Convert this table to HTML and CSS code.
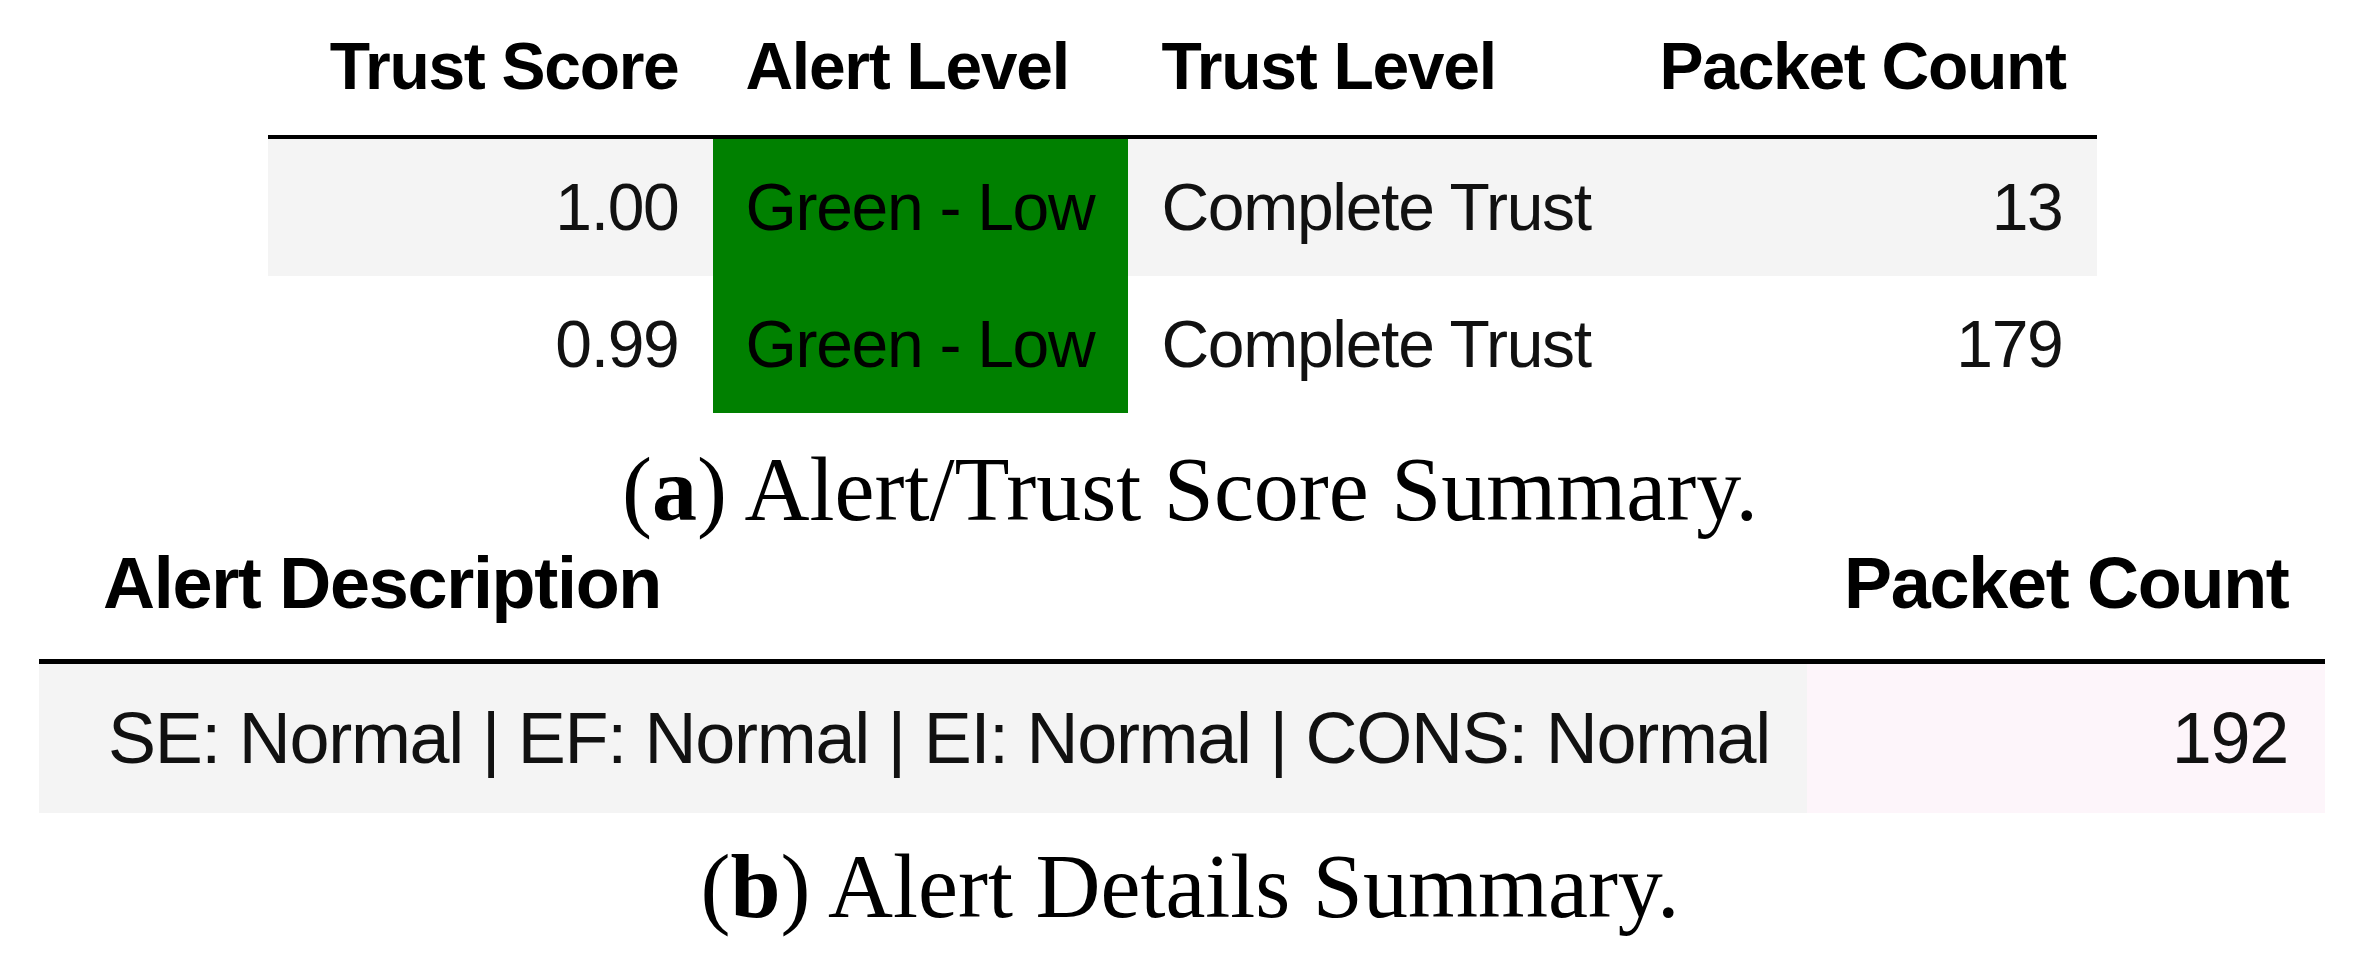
FILE: index.html
```html
<!DOCTYPE html>
<html lang="en">
<head>
<meta charset="utf-8">
<title>Alert Summary</title>
<link rel="stylesheet" href="styles.css">
</head>
<body>
<div class="figure">
  <table class="tbl tbl-a">
    <colgroup>
      <col class="a-c1"><col class="a-c2"><col class="a-c3"><col class="a-c4">
    </colgroup>
    <thead>
      <tr>
        <th class="right">Trust Score</th>
        <th class="left">Alert Level</th>
        <th class="left">Trust Level</th>
        <th class="right">Packet Count</th>
      </tr>
    </thead>
    <tbody>
      <tr class="odd">
        <td class="right">1.00</td>
        <td class="left green">Green - Low</td>
        <td class="left">Complete Trust</td>
        <td class="right">13</td>
      </tr>
      <tr>
        <td class="right">0.99</td>
        <td class="left green">Green - Low</td>
        <td class="left">Complete Trust</td>
        <td class="right">179</td>
      </tr>
    </tbody>
  </table>
  <p class="caption caption-a">(<b>a</b>) Alert/Trust Score Summary.</p>

  <table class="tbl tbl-b">
    <colgroup>
      <col class="b-c1"><col class="b-c2">
    </colgroup>
    <thead>
      <tr>
        <th class="left desc-head">Alert Description</th>
        <th class="right">Packet Count</th>
      </tr>
    </thead>
    <tbody>
      <tr class="odd">
        <td class="right">SE: Normal | EF: Normal | EI: Normal | CONS: Normal</td>
        <td class="right pink">192</td>
      </tr>
    </tbody>
  </table>
  <p class="caption caption-b">(<b>b</b>) Alert Details Summary.</p>
</div>
</body>
</html>
```

FILE: styles.css
```css
html, body {
  margin: 0;
  padding: 0;
  background: #ffffff;
}

body {
  width: 2364px;
  height: 972px;
  overflow: hidden;
  font-family: "Liberation Sans", Arial, sans-serif;
  color: #000;
}

.figure {
  display: flex;
  flex-direction: column;
  align-items: center;
}

.tbl {
  border-collapse: collapse;
  table-layout: fixed;
}

.tbl th {
  font-weight: 700;
  white-space: nowrap;
  color: #000;
}

.tbl td {
  font-weight: 400;
  white-space: nowrap;
  color: #111;
}

.left { text-align: left; }
.right { text-align: right; }

/* ---------- table (a) ---------- */
.tbl-a {
  width: 1829px;
}
.a-c1 { width: 445px; }
.a-c2 { width: 415px; }
.a-c3 { width: 498px; }
.a-c4 { width: 471px; }

.tbl-a th,
.tbl-a td {
  font-size: 66px;
  line-height: 66px;
  letter-spacing: -1.3px;
  padding-left: 34px;
  padding-right: 34px;
}

.tbl-a th {
  padding-top: 33px;
  padding-bottom: 36px;
  border-bottom: 4px solid #000;
}

.tbl-a td {
  padding-top: 35px;
  padding-bottom: 36px;
}

.tbl-a td.left,
.tbl-a th.left { padding-left: 33px; }

.tbl-a th:nth-child(3),
.tbl-a td:nth-child(3) { padding-left: 34px; }

.odd td { background: #f4f4f4; }

.tbl td.green {
  background: #008000;
  color: #000;
}

.tbl td.pink {
  background: #fdf5fa;
}

/* ---------- captions ---------- */
.caption {
  margin: 0;
  height: 90px;
  font-family: "Liberation Serif", "Times New Roman", serif;
  font-size: 90px;
  line-height: 90px;
  color: #000;
  white-space: nowrap;
  text-align: center;
  padding-left: 16px;
}

.caption b { font-weight: 700; }

.caption-a { margin-top: 32px; }
.caption-b { margin-top: 29px; }

/* ---------- table (b) ---------- */
.tbl-b {
  width: 2286px;
}
.b-c1 { width: 1768px; }
.b-c2 { width: 518px; }

.tbl-b th,
.tbl-b td {
  font-size: 72px;
  line-height: 72px;
  letter-spacing: -1.3px;
  padding-left: 37px;
  padding-right: 37px;
}

.tbl-b th {
  padding-top: 12px;
  padding-bottom: 40px;
  border-bottom: 5px solid #000;
}

.tbl-b th.desc-head { padding-left: 64px; }

.tbl-b td {
  padding-top: 38px;
  padding-bottom: 39px;
}
```
